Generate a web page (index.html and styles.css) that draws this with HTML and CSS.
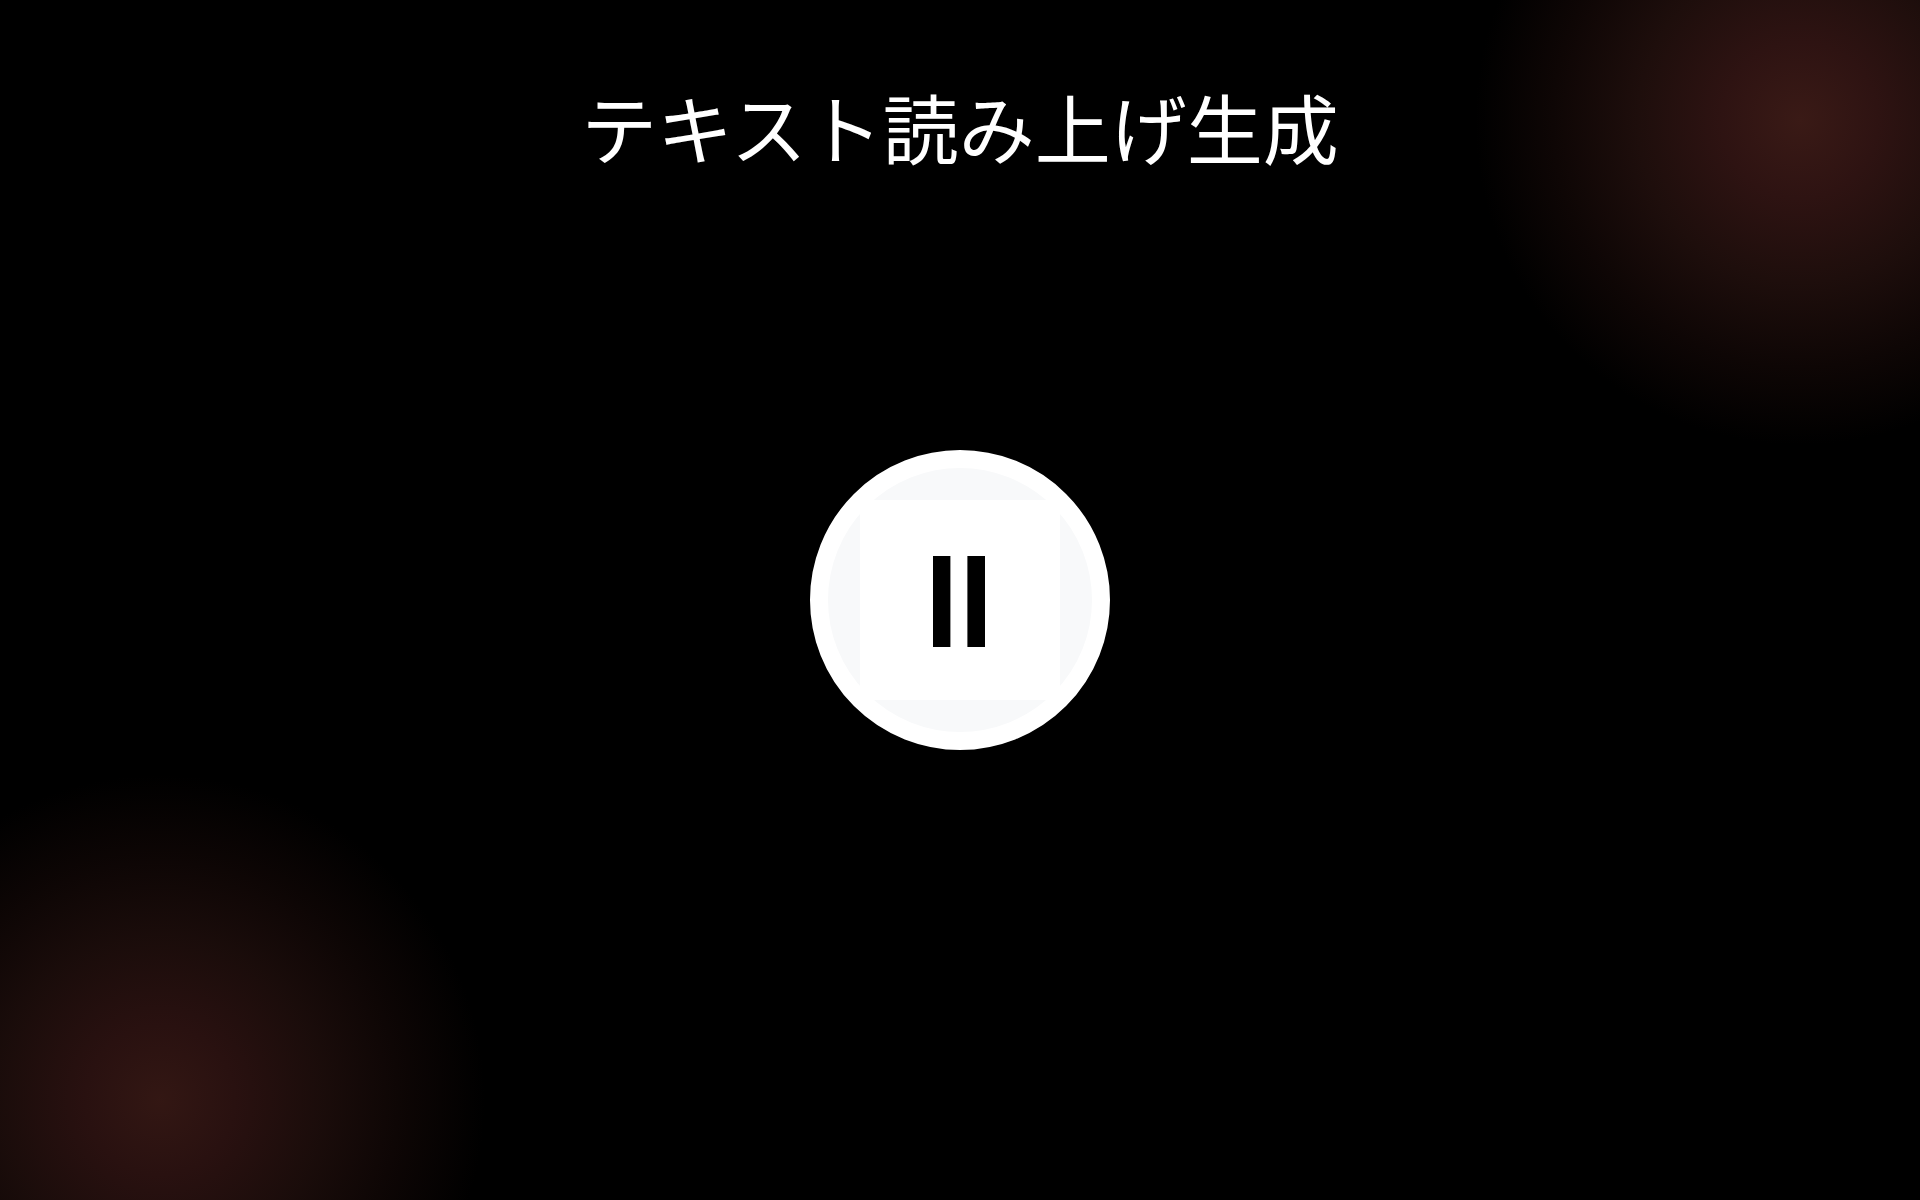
FILE: index.html
```html
<!DOCTYPE html>
<html lang="ja">
<head>
<meta charset="utf-8">
<title>テキスト読み上げ生成</title>
<link rel="stylesheet" href="styles.css">
</head>
<body>
<main class="stage">
  <div class="glow glow-top"></div>
  <div class="glow glow-bottom"></div>
  <h1 class="title">テキスト読み上げ生成</h1>
  <div class="center">
    <button class="record" type="button" aria-label="一時停止">
      <span class="plate">
        <svg class="pause" viewBox="0 0 52 91" width="52" height="91" aria-hidden="true">
          <rect x="0" y="0" width="17.4" height="91"></rect>
          <rect x="34.4" y="0" width="17.6" height="91"></rect>
        </svg>
      </span>
    </button>
  </div>
</main>
</body>
</html>
```
FILE: styles.css
```css
* { box-sizing: border-box; }
html, body { margin: 0; height: 100%; background: #000; }
.stage {
  position: relative;
  width: 100%;
  height: 1200px;
  overflow: hidden;
  display: grid;
  grid-template-rows: 1fr auto 1fr;
  justify-items: center;
  background: #000;
}
.glow {
  position: absolute;
  width: 650px;
  height: 650px;
  border-radius: 50%;
  background: radial-gradient(circle closest-side, #3a1a16 0%, #2e1312 24%, #1e0e0c 50%, #0e0605 76%, #000 100%);
}
.glow-top { left: 1475px; top: -205px; }
.glow-bottom { left: -165px; top: 775px; opacity: .88; }
.title {
  position: relative;
  margin: 76px 0 0;
  font-family: "Noto Sans CJK JP", "Noto Sans", sans-serif;
  font-weight: 400;
  font-size: 76px;
  line-height: 100px;
  color: #fff;
  align-self: start;
}
.center { position: relative; grid-row: 2; }
.record {
  width: 300px;
  height: 300px;
  padding: 0;
  border: 18px solid #fff;
  border-radius: 50%;
  background: #f8f9fa;
  display: flex;
  align-items: center;
  justify-content: center;
}
.plate {
  width: 200px;
  height: 200px;
  background: #fff;
  display: flex;
  align-items: center;
  justify-content: center;
}
.pause { display: block; fill: #000; margin: 3px 0 0 -1.4px; }
```
